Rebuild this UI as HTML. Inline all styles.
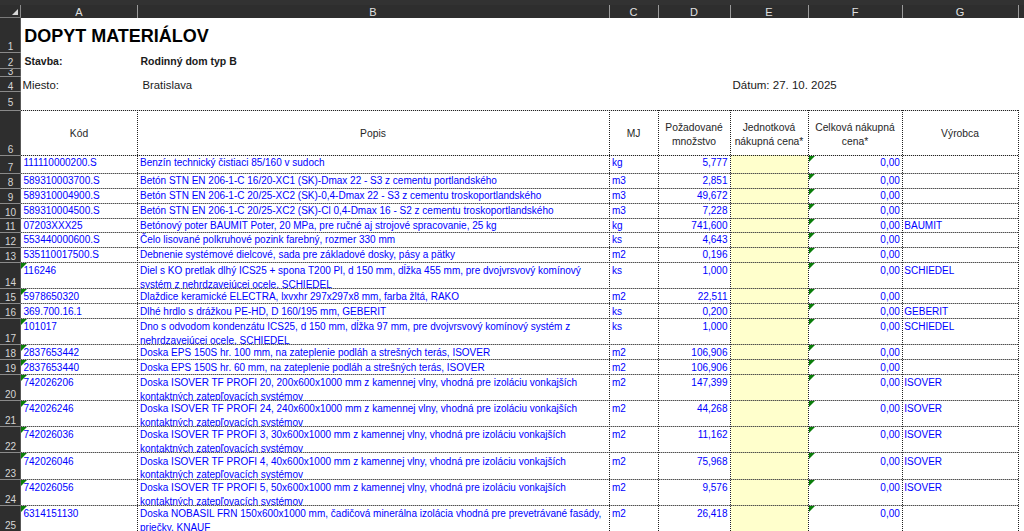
<!DOCTYPE html>
<html><head><meta charset="utf-8"><style>
html,body{margin:0;padding:0;}
body{width:1024px;height:531px;overflow:hidden;position:relative;background:#fff;font-family:"Liberation Sans", sans-serif;}
.t{position:absolute;white-space:nowrap;line-height:1;}
.r{position:absolute;}
</style></head><body>
<div class="r" style="left:731px;top:155px;width:77px;height:376px;background:#ffffcc;"></div>
<div class="t" style="left:24.2px;top:26.76px;font-size:18px;color:#000;font-weight:bold;">DOPYT MATERIÁLOV</div>
<div class="t" style="left:24.5px;top:56.11px;font-size:10.5px;color:#1a1a1a;font-weight:bold;">Stavba:</div>
<div class="t" style="left:140.5px;top:56.11px;font-size:10.5px;color:#1a1a1a;font-weight:bold;">Rodinný dom typ B</div>
<div class="t" style="left:22.5px;top:79.83px;font-size:11.3px;color:#1a1a1a;font-weight:normal;">Miesto:</div>
<div class="t" style="left:142.5px;top:79.83px;font-size:11.3px;color:#1a1a1a;font-weight:normal;">Bratislava</div>
<div class="t" style="left:732.5px;top:79.67px;font-size:11.5px;color:#1a1a1a;font-weight:normal;">Dátum: 27. 10. 2025</div>
<div class="t" style="left:-121.0px;width:400px;text-align:center;top:128.58px;font-size:10.3px;color:#262626;font-weight:normal;">Kód</div>
<div class="t" style="left:173.0px;width:400px;text-align:center;top:128.58px;font-size:10.3px;color:#262626;font-weight:normal;">Popis</div>
<div class="t" style="left:433.5px;width:400px;text-align:center;top:128.58px;font-size:10.3px;color:#262626;font-weight:normal;">MJ</div>
<div class="t" style="left:494.0px;width:400px;text-align:center;top:122.58px;font-size:10.3px;color:#262626;font-weight:normal;">Požadované</div>
<div class="t" style="left:494.0px;width:400px;text-align:center;top:136.58px;font-size:10.3px;color:#262626;font-weight:normal;">množstvo</div>
<div class="t" style="left:569.0px;width:400px;text-align:center;top:122.58px;font-size:10.3px;color:#262626;font-weight:normal;">Jednotková</div>
<div class="t" style="left:569.0px;width:400px;text-align:center;top:136.58px;font-size:10.3px;color:#262626;font-weight:normal;">nákupná cena*</div>
<div class="t" style="left:655.0px;width:400px;text-align:center;top:122.58px;font-size:10.3px;color:#262626;font-weight:normal;">Celková nákupná</div>
<div class="t" style="left:655.0px;width:400px;text-align:center;top:136.58px;font-size:10.3px;color:#262626;font-weight:normal;">cena*</div>
<div class="t" style="left:760.0px;width:400px;text-align:center;top:128.58px;font-size:10.3px;color:#262626;font-weight:normal;">Výrobca</div>
<div class="t" style="left:23.5px;top:158.23px;font-size:10px;color:#0000ff;font-weight:normal;">111110000200.S</div>
<div class="r" style="left:138px;top:156px;width:470px;height:17px;overflow:hidden;">
<div class="t" style="left:2px;top:2.23px;font-size:10px;color:#0000ff;">Benzín technický čistiaci 85/160 v sudoch</div>
</div>
<div class="t" style="left:612px;top:158.23px;font-size:10px;color:#0000ff;font-weight:normal;">kg</div>
<div class="t" style="right:296.5px;top:158.23px;font-size:10px;color:#0000ff;font-weight:normal;">5,777</div>
<div class="t" style="right:124.20000000000005px;top:158.23px;font-size:10px;color:#0000ff;font-weight:normal;">0,00</div>
<div class="t" style="left:23.5px;top:176.23px;font-size:10px;color:#0000ff;font-weight:normal;">589310003700.S</div>
<div class="r" style="left:138px;top:174px;width:470px;height:14px;overflow:hidden;">
<div class="t" style="left:2px;top:2.23px;font-size:10px;color:#0000ff;">Betón STN EN 206-1-C 16/20-XC1 (SK)-Dmax 22 - S3 z cementu portlandského</div>
</div>
<div class="t" style="left:612px;top:176.23px;font-size:10px;color:#0000ff;font-weight:normal;">m3</div>
<div class="t" style="right:296.5px;top:176.23px;font-size:10px;color:#0000ff;font-weight:normal;">2,851</div>
<div class="t" style="right:124.20000000000005px;top:176.23px;font-size:10px;color:#0000ff;font-weight:normal;">0,00</div>
<div class="t" style="left:23.5px;top:191.23px;font-size:10px;color:#0000ff;font-weight:normal;">589310004900.S</div>
<div class="r" style="left:138px;top:189px;width:470px;height:14px;overflow:hidden;">
<div class="t" style="left:2px;top:2.23px;font-size:10px;color:#0000ff;">Betón STN EN 206-1-C 20/25-XC2 (SK)-0,4-Dmax 22 - S3 z cementu troskoportlandského</div>
</div>
<div class="t" style="left:612px;top:191.23px;font-size:10px;color:#0000ff;font-weight:normal;">m3</div>
<div class="t" style="right:296.5px;top:191.23px;font-size:10px;color:#0000ff;font-weight:normal;">49,672</div>
<div class="t" style="right:124.20000000000005px;top:191.23px;font-size:10px;color:#0000ff;font-weight:normal;">0,00</div>
<div class="t" style="left:23.5px;top:206.23px;font-size:10px;color:#0000ff;font-weight:normal;">589310004500.S</div>
<div class="r" style="left:138px;top:204px;width:470px;height:14px;overflow:hidden;">
<div class="t" style="left:2px;top:2.23px;font-size:10px;color:#0000ff;">Betón STN EN 206-1-C 20/25-XC2 (SK)-Cl 0,4-Dmax 16 - S2 z cementu troskoportlandského</div>
</div>
<div class="t" style="left:612px;top:206.23px;font-size:10px;color:#0000ff;font-weight:normal;">m3</div>
<div class="t" style="right:296.5px;top:206.23px;font-size:10px;color:#0000ff;font-weight:normal;">7,228</div>
<div class="t" style="right:124.20000000000005px;top:206.23px;font-size:10px;color:#0000ff;font-weight:normal;">0,00</div>
<div class="t" style="left:23.5px;top:221.23px;font-size:10px;color:#0000ff;font-weight:normal;">07203XXX25</div>
<div class="r" style="left:138px;top:219px;width:470px;height:13px;overflow:hidden;">
<div class="t" style="left:2px;top:2.23px;font-size:10px;color:#0000ff;">Betónový poter BAUMIT Poter, 20 MPa, pre ručné aj strojové spracovanie, 25 kg</div>
</div>
<div class="t" style="left:612px;top:221.23px;font-size:10px;color:#0000ff;font-weight:normal;">kg</div>
<div class="t" style="right:296.5px;top:221.23px;font-size:10px;color:#0000ff;font-weight:normal;">741,600</div>
<div class="t" style="right:124.20000000000005px;top:221.23px;font-size:10px;color:#0000ff;font-weight:normal;">0,00</div>
<div class="t" style="left:904.3px;top:221.23px;font-size:10px;color:#0000ff;font-weight:normal;">BAUMIT</div>
<div class="t" style="left:23.5px;top:235.23px;font-size:10px;color:#0000ff;font-weight:normal;">553440000600.S</div>
<div class="r" style="left:138px;top:233px;width:470px;height:14px;overflow:hidden;">
<div class="t" style="left:2px;top:2.23px;font-size:10px;color:#0000ff;">Čelo lisované polkruhové pozink farebný, rozmer 330 mm</div>
</div>
<div class="t" style="left:612px;top:235.23px;font-size:10px;color:#0000ff;font-weight:normal;">ks</div>
<div class="t" style="right:296.5px;top:235.23px;font-size:10px;color:#0000ff;font-weight:normal;">4,643</div>
<div class="t" style="right:124.20000000000005px;top:235.23px;font-size:10px;color:#0000ff;font-weight:normal;">0,00</div>
<div class="t" style="left:23.5px;top:250.23px;font-size:10px;color:#0000ff;font-weight:normal;">535110017500.S</div>
<div class="r" style="left:138px;top:248px;width:470px;height:14px;overflow:hidden;">
<div class="t" style="left:2px;top:2.23px;font-size:10px;color:#0000ff;">Debnenie systémové dielcové, sada pre základové dosky, pásy a pätky</div>
</div>
<div class="t" style="left:612px;top:250.23px;font-size:10px;color:#0000ff;font-weight:normal;">m2</div>
<div class="t" style="right:296.5px;top:250.23px;font-size:10px;color:#0000ff;font-weight:normal;">0,196</div>
<div class="t" style="right:124.20000000000005px;top:250.23px;font-size:10px;color:#0000ff;font-weight:normal;">0,00</div>
<div class="t" style="left:23.5px;top:266.04px;font-size:10px;color:#0000ff;font-weight:normal;">116246</div>
<div class="r" style="left:138px;top:263px;width:470px;height:25px;overflow:hidden;">
<div class="t" style="left:2px;top:3.04px;font-size:10px;color:#0000ff;">Diel s KO pretlak dlhý ICS25 + spona T200 Pl, d 150 mm, dĺžka 455 mm, pre dvojvrsvový komínový</div>
<div class="t" style="left:2px;top:16.54px;font-size:10px;color:#0000ff;">systém z nehrdzavejúcej ocele, SCHIEDEL</div>
</div>
<div class="t" style="left:612px;top:266.04px;font-size:10px;color:#0000ff;font-weight:normal;">ks</div>
<div class="t" style="right:296.5px;top:266.04px;font-size:10px;color:#0000ff;font-weight:normal;">1,000</div>
<div class="t" style="right:124.20000000000005px;top:266.04px;font-size:10px;color:#0000ff;font-weight:normal;">0,00</div>
<div class="t" style="left:904.3px;top:266.04px;font-size:10px;color:#0000ff;font-weight:normal;">SCHIEDEL</div>
<div class="t" style="left:23.5px;top:292.04px;font-size:10px;color:#0000ff;font-weight:normal;">5978650320</div>
<div class="r" style="left:138px;top:289px;width:470px;height:14px;overflow:hidden;">
<div class="t" style="left:2px;top:3.04px;font-size:10px;color:#0000ff;">Dlaždice keramické ELECTRA, lxvxhr 297x297x8 mm, farba žltá, RAKO</div>
</div>
<div class="t" style="left:612px;top:292.04px;font-size:10px;color:#0000ff;font-weight:normal;">m2</div>
<div class="t" style="right:296.5px;top:292.04px;font-size:10px;color:#0000ff;font-weight:normal;">22,511</div>
<div class="t" style="right:124.20000000000005px;top:292.04px;font-size:10px;color:#0000ff;font-weight:normal;">0,00</div>
<div class="t" style="left:23.5px;top:307.04px;font-size:10px;color:#0000ff;font-weight:normal;">369.700.16.1</div>
<div class="r" style="left:138px;top:304px;width:470px;height:14px;overflow:hidden;">
<div class="t" style="left:2px;top:3.04px;font-size:10px;color:#0000ff;">Dlhé hrdlo s drážkou PE-HD, D 160/195 mm, GEBERIT</div>
</div>
<div class="t" style="left:612px;top:307.04px;font-size:10px;color:#0000ff;font-weight:normal;">ks</div>
<div class="t" style="right:296.5px;top:307.04px;font-size:10px;color:#0000ff;font-weight:normal;">0,200</div>
<div class="t" style="right:124.20000000000005px;top:307.04px;font-size:10px;color:#0000ff;font-weight:normal;">0,00</div>
<div class="t" style="left:904.3px;top:307.04px;font-size:10px;color:#0000ff;font-weight:normal;">GEBERIT</div>
<div class="t" style="left:23.5px;top:322.04px;font-size:10px;color:#0000ff;font-weight:normal;">101017</div>
<div class="r" style="left:138px;top:319px;width:470px;height:25px;overflow:hidden;">
<div class="t" style="left:2px;top:3.04px;font-size:10px;color:#0000ff;">Dno s odvodom kondenzátu ICS25, d 150 mm, dĺžka 97 mm, pre dvojvrsvový komínový systém z</div>
<div class="t" style="left:2px;top:16.54px;font-size:10px;color:#0000ff;">nehrdzavejúcej ocele, SCHIEDEL</div>
</div>
<div class="t" style="left:612px;top:322.04px;font-size:10px;color:#0000ff;font-weight:normal;">ks</div>
<div class="t" style="right:296.5px;top:322.04px;font-size:10px;color:#0000ff;font-weight:normal;">1,000</div>
<div class="t" style="right:124.20000000000005px;top:322.04px;font-size:10px;color:#0000ff;font-weight:normal;">0,00</div>
<div class="t" style="left:904.3px;top:322.04px;font-size:10px;color:#0000ff;font-weight:normal;">SCHIEDEL</div>
<div class="t" style="left:23.5px;top:348.04px;font-size:10px;color:#0000ff;font-weight:normal;">2837653442</div>
<div class="r" style="left:138px;top:345px;width:470px;height:14px;overflow:hidden;">
<div class="t" style="left:2px;top:3.04px;font-size:10px;color:#0000ff;">Doska EPS 150S hr. 100 mm, na zateplenie podláh a strešných terás, ISOVER</div>
</div>
<div class="t" style="left:612px;top:348.04px;font-size:10px;color:#0000ff;font-weight:normal;">m2</div>
<div class="t" style="right:296.5px;top:348.04px;font-size:10px;color:#0000ff;font-weight:normal;">106,906</div>
<div class="t" style="right:124.20000000000005px;top:348.04px;font-size:10px;color:#0000ff;font-weight:normal;">0,00</div>
<div class="t" style="left:23.5px;top:363.04px;font-size:10px;color:#0000ff;font-weight:normal;">2837653440</div>
<div class="r" style="left:138px;top:360px;width:470px;height:14px;overflow:hidden;">
<div class="t" style="left:2px;top:3.04px;font-size:10px;color:#0000ff;">Doska EPS 150S hr. 60 mm, na zateplenie podláh a strešných terás, ISOVER</div>
</div>
<div class="t" style="left:612px;top:363.04px;font-size:10px;color:#0000ff;font-weight:normal;">m2</div>
<div class="t" style="right:296.5px;top:363.04px;font-size:10px;color:#0000ff;font-weight:normal;">106,906</div>
<div class="t" style="right:124.20000000000005px;top:363.04px;font-size:10px;color:#0000ff;font-weight:normal;">0,00</div>
<div class="t" style="left:23.5px;top:378.04px;font-size:10px;color:#0000ff;font-weight:normal;">742026206</div>
<div class="r" style="left:138px;top:375px;width:470px;height:25px;overflow:hidden;">
<div class="t" style="left:2px;top:3.04px;font-size:10px;color:#0000ff;">Doska ISOVER TF PROFI 20, 200x600x1000 mm z kamennej vlny, vhodná pre izoláciu vonkajších</div>
<div class="t" style="left:2px;top:16.54px;font-size:10px;color:#0000ff;">kontaktných zatepľovacích systémov</div>
</div>
<div class="t" style="left:612px;top:378.04px;font-size:10px;color:#0000ff;font-weight:normal;">m2</div>
<div class="t" style="right:296.5px;top:378.04px;font-size:10px;color:#0000ff;font-weight:normal;">147,399</div>
<div class="t" style="right:124.20000000000005px;top:378.04px;font-size:10px;color:#0000ff;font-weight:normal;">0,00</div>
<div class="t" style="left:904.3px;top:378.04px;font-size:10px;color:#0000ff;font-weight:normal;">ISOVER</div>
<div class="t" style="left:23.5px;top:404.04px;font-size:10px;color:#0000ff;font-weight:normal;">742026246</div>
<div class="r" style="left:138px;top:401px;width:470px;height:25px;overflow:hidden;">
<div class="t" style="left:2px;top:3.04px;font-size:10px;color:#0000ff;">Doska ISOVER TF PROFI 24, 240x600x1000 mm z kamennej vlny, vhodná pre izoláciu vonkajších</div>
<div class="t" style="left:2px;top:16.54px;font-size:10px;color:#0000ff;">kontaktných zatepľovacích systémov</div>
</div>
<div class="t" style="left:612px;top:404.04px;font-size:10px;color:#0000ff;font-weight:normal;">m2</div>
<div class="t" style="right:296.5px;top:404.04px;font-size:10px;color:#0000ff;font-weight:normal;">44,268</div>
<div class="t" style="right:124.20000000000005px;top:404.04px;font-size:10px;color:#0000ff;font-weight:normal;">0,00</div>
<div class="t" style="left:904.3px;top:404.04px;font-size:10px;color:#0000ff;font-weight:normal;">ISOVER</div>
<div class="t" style="left:23.5px;top:430.04px;font-size:10px;color:#0000ff;font-weight:normal;">742026036</div>
<div class="r" style="left:138px;top:427px;width:470px;height:25px;overflow:hidden;">
<div class="t" style="left:2px;top:3.04px;font-size:10px;color:#0000ff;">Doska ISOVER TF PROFI 3, 30x600x1000 mm z kamennej vlny, vhodná pre izoláciu vonkajších</div>
<div class="t" style="left:2px;top:16.54px;font-size:10px;color:#0000ff;">kontaktných zatepľovacích systémov</div>
</div>
<div class="t" style="left:612px;top:430.04px;font-size:10px;color:#0000ff;font-weight:normal;">m2</div>
<div class="t" style="right:296.5px;top:430.04px;font-size:10px;color:#0000ff;font-weight:normal;">11,162</div>
<div class="t" style="right:124.20000000000005px;top:430.04px;font-size:10px;color:#0000ff;font-weight:normal;">0,00</div>
<div class="t" style="left:904.3px;top:430.04px;font-size:10px;color:#0000ff;font-weight:normal;">ISOVER</div>
<div class="t" style="left:23.5px;top:456.54px;font-size:10px;color:#0000ff;font-weight:normal;">742026046</div>
<div class="r" style="left:138px;top:453px;width:470px;height:26px;overflow:hidden;">
<div class="t" style="left:2px;top:3.54px;font-size:10px;color:#0000ff;">Doska ISOVER TF PROFI 4, 40x600x1000 mm z kamennej vlny, vhodná pre izoláciu vonkajších</div>
<div class="t" style="left:2px;top:17.04px;font-size:10px;color:#0000ff;">kontaktných zatepľovacích systémov</div>
</div>
<div class="t" style="left:612px;top:456.54px;font-size:10px;color:#0000ff;font-weight:normal;">m2</div>
<div class="t" style="right:296.5px;top:456.54px;font-size:10px;color:#0000ff;font-weight:normal;">75,968</div>
<div class="t" style="right:124.20000000000005px;top:456.54px;font-size:10px;color:#0000ff;font-weight:normal;">0,00</div>
<div class="t" style="left:904.3px;top:456.54px;font-size:10px;color:#0000ff;font-weight:normal;">ISOVER</div>
<div class="t" style="left:23.5px;top:483.04px;font-size:10px;color:#0000ff;font-weight:normal;">742026056</div>
<div class="r" style="left:138px;top:480px;width:470px;height:25px;overflow:hidden;">
<div class="t" style="left:2px;top:3.04px;font-size:10px;color:#0000ff;">Doska ISOVER TF PROFI 5, 50x600x1000 mm z kamennej vlny, vhodná pre izoláciu vonkajších</div>
<div class="t" style="left:2px;top:16.54px;font-size:10px;color:#0000ff;">kontaktných zatepľovacích systémov</div>
</div>
<div class="t" style="left:612px;top:483.04px;font-size:10px;color:#0000ff;font-weight:normal;">m2</div>
<div class="t" style="right:296.5px;top:483.04px;font-size:10px;color:#0000ff;font-weight:normal;">9,576</div>
<div class="t" style="right:124.20000000000005px;top:483.04px;font-size:10px;color:#0000ff;font-weight:normal;">0,00</div>
<div class="t" style="left:904.3px;top:483.04px;font-size:10px;color:#0000ff;font-weight:normal;">ISOVER</div>
<div class="t" style="left:23.5px;top:509.04px;font-size:10px;color:#0000ff;font-weight:normal;">6314151130</div>
<div class="r" style="left:138px;top:506px;width:470px;height:25px;overflow:hidden;">
<div class="t" style="left:2px;top:3.04px;font-size:10px;color:#0000ff;">Doska NOBASIL FRN 150x600x1000 mm, čadičová minerálna izolácia vhodná pre prevetrávané fasády,</div>
<div class="t" style="left:2px;top:16.53px;font-size:10px;color:#0000ff;">priečky, KNAUF</div>
</div>
<div class="t" style="left:612px;top:509.04px;font-size:10px;color:#0000ff;font-weight:normal;">m2</div>
<div class="t" style="right:296.5px;top:509.04px;font-size:10px;color:#0000ff;font-weight:normal;">26,418</div>
<div class="t" style="right:124.20000000000005px;top:509.04px;font-size:10px;color:#0000ff;font-weight:normal;">0,00</div>
<div class="r" style="left:21px;top:110px;width:998px;height:1px;background:repeating-linear-gradient(90deg,#222 0 1px,rgba(0,0,0,0.15) 1px 2px);"></div>
<div class="r" style="left:21px;top:155px;width:998px;height:1px;background:repeating-linear-gradient(90deg,#222 0 1px,rgba(0,0,0,0.15) 1px 2px);"></div>
<div class="r" style="left:21px;top:173px;width:998px;height:1px;background:repeating-linear-gradient(90deg,#505050 0 1px,rgba(0,0,0,0.3) 1px 2px);"></div>
<div class="r" style="left:21px;top:188px;width:998px;height:1px;background:repeating-linear-gradient(90deg,#505050 0 1px,rgba(0,0,0,0.3) 1px 2px);"></div>
<div class="r" style="left:21px;top:203px;width:998px;height:1px;background:repeating-linear-gradient(90deg,#505050 0 1px,rgba(0,0,0,0.3) 1px 2px);"></div>
<div class="r" style="left:21px;top:218px;width:998px;height:1px;background:repeating-linear-gradient(90deg,#505050 0 1px,rgba(0,0,0,0.3) 1px 2px);"></div>
<div class="r" style="left:21px;top:232px;width:998px;height:1px;background:repeating-linear-gradient(90deg,#505050 0 1px,rgba(0,0,0,0.3) 1px 2px);"></div>
<div class="r" style="left:21px;top:247px;width:998px;height:1px;background:repeating-linear-gradient(90deg,#505050 0 1px,rgba(0,0,0,0.3) 1px 2px);"></div>
<div class="r" style="left:21px;top:262px;width:998px;height:1px;background:repeating-linear-gradient(90deg,#505050 0 1px,rgba(0,0,0,0.3) 1px 2px);"></div>
<div class="r" style="left:21px;top:288px;width:998px;height:1px;background:repeating-linear-gradient(90deg,#505050 0 1px,rgba(0,0,0,0.3) 1px 2px);"></div>
<div class="r" style="left:21px;top:303px;width:998px;height:1px;background:repeating-linear-gradient(90deg,#505050 0 1px,rgba(0,0,0,0.3) 1px 2px);"></div>
<div class="r" style="left:21px;top:318px;width:998px;height:1px;background:repeating-linear-gradient(90deg,#505050 0 1px,rgba(0,0,0,0.3) 1px 2px);"></div>
<div class="r" style="left:21px;top:344px;width:998px;height:1px;background:repeating-linear-gradient(90deg,#505050 0 1px,rgba(0,0,0,0.3) 1px 2px);"></div>
<div class="r" style="left:21px;top:359px;width:998px;height:1px;background:repeating-linear-gradient(90deg,#505050 0 1px,rgba(0,0,0,0.3) 1px 2px);"></div>
<div class="r" style="left:21px;top:374px;width:998px;height:1px;background:repeating-linear-gradient(90deg,#505050 0 1px,rgba(0,0,0,0.3) 1px 2px);"></div>
<div class="r" style="left:21px;top:400px;width:998px;height:1px;background:repeating-linear-gradient(90deg,#505050 0 1px,rgba(0,0,0,0.3) 1px 2px);"></div>
<div class="r" style="left:21px;top:426px;width:998px;height:1px;background:repeating-linear-gradient(90deg,#505050 0 1px,rgba(0,0,0,0.3) 1px 2px);"></div>
<div class="r" style="left:21px;top:452px;width:998px;height:1px;background:repeating-linear-gradient(90deg,#505050 0 1px,rgba(0,0,0,0.3) 1px 2px);"></div>
<div class="r" style="left:21px;top:479px;width:998px;height:1px;background:repeating-linear-gradient(90deg,#505050 0 1px,rgba(0,0,0,0.3) 1px 2px);"></div>
<div class="r" style="left:21px;top:505px;width:998px;height:1px;background:repeating-linear-gradient(90deg,#505050 0 1px,rgba(0,0,0,0.3) 1px 2px);"></div>
<div class="r" style="left:137px;top:110px;width:1px;height:421px;background:repeating-linear-gradient(180deg,#222 0 1px,transparent 1px 2px);"></div>
<div class="r" style="left:609px;top:110px;width:1px;height:421px;background:repeating-linear-gradient(180deg,#222 0 1px,transparent 1px 2px);"></div>
<div class="r" style="left:658px;top:110px;width:1px;height:421px;background:repeating-linear-gradient(180deg,#222 0 1px,transparent 1px 2px);"></div>
<div class="r" style="left:730px;top:110px;width:1px;height:421px;background:repeating-linear-gradient(180deg,#222 0 1px,transparent 1px 2px);"></div>
<div class="r" style="left:808px;top:110px;width:1px;height:421px;background:repeating-linear-gradient(180deg,#222 0 1px,transparent 1px 2px);"></div>
<div class="r" style="left:902px;top:110px;width:1px;height:421px;background:repeating-linear-gradient(180deg,#222 0 1px,transparent 1px 2px);"></div>
<div class="r" style="left:1018px;top:110px;width:1px;height:421px;background:repeating-linear-gradient(180deg,#222 0 1px,transparent 1px 2px);"></div>
<div class="r" style="left:809px;top:156px;width:0;height:0;border-top:6px solid #0a7d0a;border-right:6px solid transparent;"></div>
<div class="r" style="left:809px;top:174px;width:0;height:0;border-top:6px solid #0a7d0a;border-right:6px solid transparent;"></div>
<div class="r" style="left:809px;top:189px;width:0;height:0;border-top:6px solid #0a7d0a;border-right:6px solid transparent;"></div>
<div class="r" style="left:809px;top:204px;width:0;height:0;border-top:6px solid #0a7d0a;border-right:6px solid transparent;"></div>
<div class="r" style="left:809px;top:219px;width:0;height:0;border-top:6px solid #0a7d0a;border-right:6px solid transparent;"></div>
<div class="r" style="left:809px;top:233px;width:0;height:0;border-top:6px solid #0a7d0a;border-right:6px solid transparent;"></div>
<div class="r" style="left:809px;top:248px;width:0;height:0;border-top:6px solid #0a7d0a;border-right:6px solid transparent;"></div>
<div class="r" style="left:809px;top:263px;width:0;height:0;border-top:6px solid #0a7d0a;border-right:6px solid transparent;"></div>
<div class="r" style="left:21px;top:263px;width:0;height:0;border-top:6px solid #0a7d0a;border-right:6px solid transparent;"></div>
<div class="r" style="left:809px;top:289px;width:0;height:0;border-top:6px solid #0a7d0a;border-right:6px solid transparent;"></div>
<div class="r" style="left:21px;top:289px;width:0;height:0;border-top:6px solid #0a7d0a;border-right:6px solid transparent;"></div>
<div class="r" style="left:809px;top:304px;width:0;height:0;border-top:6px solid #0a7d0a;border-right:6px solid transparent;"></div>
<div class="r" style="left:809px;top:319px;width:0;height:0;border-top:6px solid #0a7d0a;border-right:6px solid transparent;"></div>
<div class="r" style="left:21px;top:319px;width:0;height:0;border-top:6px solid #0a7d0a;border-right:6px solid transparent;"></div>
<div class="r" style="left:809px;top:345px;width:0;height:0;border-top:6px solid #0a7d0a;border-right:6px solid transparent;"></div>
<div class="r" style="left:21px;top:345px;width:0;height:0;border-top:6px solid #0a7d0a;border-right:6px solid transparent;"></div>
<div class="r" style="left:809px;top:360px;width:0;height:0;border-top:6px solid #0a7d0a;border-right:6px solid transparent;"></div>
<div class="r" style="left:21px;top:360px;width:0;height:0;border-top:6px solid #0a7d0a;border-right:6px solid transparent;"></div>
<div class="r" style="left:809px;top:375px;width:0;height:0;border-top:6px solid #0a7d0a;border-right:6px solid transparent;"></div>
<div class="r" style="left:21px;top:375px;width:0;height:0;border-top:6px solid #0a7d0a;border-right:6px solid transparent;"></div>
<div class="r" style="left:809px;top:401px;width:0;height:0;border-top:6px solid #0a7d0a;border-right:6px solid transparent;"></div>
<div class="r" style="left:21px;top:401px;width:0;height:0;border-top:6px solid #0a7d0a;border-right:6px solid transparent;"></div>
<div class="r" style="left:809px;top:427px;width:0;height:0;border-top:6px solid #0a7d0a;border-right:6px solid transparent;"></div>
<div class="r" style="left:21px;top:427px;width:0;height:0;border-top:6px solid #0a7d0a;border-right:6px solid transparent;"></div>
<div class="r" style="left:809px;top:453px;width:0;height:0;border-top:6px solid #0a7d0a;border-right:6px solid transparent;"></div>
<div class="r" style="left:21px;top:453px;width:0;height:0;border-top:6px solid #0a7d0a;border-right:6px solid transparent;"></div>
<div class="r" style="left:809px;top:480px;width:0;height:0;border-top:6px solid #0a7d0a;border-right:6px solid transparent;"></div>
<div class="r" style="left:21px;top:480px;width:0;height:0;border-top:6px solid #0a7d0a;border-right:6px solid transparent;"></div>
<div class="r" style="left:809px;top:506px;width:0;height:0;border-top:6px solid #0a7d0a;border-right:6px solid transparent;"></div>
<div class="r" style="left:21px;top:506px;width:0;height:0;border-top:6px solid #0a7d0a;border-right:6px solid transparent;"></div>
<div class="r" style="left:0px;top:0px;width:1024px;height:18px;background:#2e2e2e;"></div>
<div class="r" style="left:0px;top:0px;width:20px;height:531px;background:#2e2e2e;"></div>
<div class="r" style="left:20px;top:18px;width:1px;height:513px;background:#585858;"></div>
<div class="r" style="left:12px;top:9px;width:0;height:0;border-bottom:6px solid #d8d8d8;border-left:6px solid transparent;"></div>
<div class="r" style="left:0px;top:0px;width:1024px;height:5px;background:#323232;"></div>
<div class="r" style="left:20px;top:5px;width:1px;height:13px;background:#8a8a8a;"></div>
<div class="r" style="left:137px;top:5px;width:1px;height:13px;background:#9a9a9a;"></div>
<div class="r" style="left:609px;top:5px;width:1px;height:13px;background:#9a9a9a;"></div>
<div class="r" style="left:658px;top:5px;width:1px;height:13px;background:#9a9a9a;"></div>
<div class="r" style="left:730px;top:5px;width:1px;height:13px;background:#9a9a9a;"></div>
<div class="r" style="left:808px;top:5px;width:1px;height:13px;background:#9a9a9a;"></div>
<div class="r" style="left:902px;top:5px;width:1px;height:13px;background:#9a9a9a;"></div>
<div class="r" style="left:1018px;top:5px;width:1px;height:13px;background:#9a9a9a;"></div>
<div class="r" style="left:0px;top:17px;width:21px;height:1px;background:#7a7a7a;"></div>
<div class="t" style="left:-121.0px;width:400px;text-align:center;top:7.29px;font-size:11px;color:#e0e0e0;font-weight:normal;">A</div>
<div class="t" style="left:173.0px;width:400px;text-align:center;top:7.29px;font-size:11px;color:#e0e0e0;font-weight:normal;">B</div>
<div class="t" style="left:433.5px;width:400px;text-align:center;top:7.29px;font-size:11px;color:#e0e0e0;font-weight:normal;">C</div>
<div class="t" style="left:494.0px;width:400px;text-align:center;top:7.29px;font-size:11px;color:#e0e0e0;font-weight:normal;">D</div>
<div class="t" style="left:569.0px;width:400px;text-align:center;top:7.29px;font-size:11px;color:#e0e0e0;font-weight:normal;">E</div>
<div class="t" style="left:655.0px;width:400px;text-align:center;top:7.29px;font-size:11px;color:#e0e0e0;font-weight:normal;">F</div>
<div class="t" style="left:760.0px;width:400px;text-align:center;top:7.29px;font-size:11px;color:#e0e0e0;font-weight:normal;">G</div>
<div class="r" style="left:0;top:19px;width:20px;height:33px;overflow:hidden;"><div class="t" style="left:0;width:21px;text-align:center;top:22.64px;font-size:10px;color:#d6d6d6;">1</div></div>
<div class="r" style="left:0px;top:52px;width:21px;height:1px;background:#8a8a8a;"></div>
<div class="r" style="left:0;top:53px;width:20px;height:15px;overflow:hidden;"><div class="t" style="left:0;width:21px;text-align:center;top:4.63px;font-size:10px;color:#d6d6d6;">2</div></div>
<div class="r" style="left:0px;top:68px;width:21px;height:1px;background:#8a8a8a;"></div>
<div class="r" style="left:0;top:69px;width:20px;height:7px;overflow:hidden;"><div class="t" style="left:0;width:21px;text-align:center;top:-2.37px;font-size:10px;color:#d6d6d6;">3</div></div>
<div class="r" style="left:0px;top:76px;width:21px;height:1px;background:#8a8a8a;"></div>
<div class="r" style="left:0;top:77px;width:20px;height:14px;overflow:hidden;"><div class="t" style="left:0;width:21px;text-align:center;top:5.13px;font-size:10px;color:#d6d6d6;">4</div></div>
<div class="r" style="left:0px;top:91px;width:21px;height:1px;background:#8a8a8a;"></div>
<div class="r" style="left:0;top:92px;width:20px;height:18px;overflow:hidden;"><div class="t" style="left:0;width:21px;text-align:center;top:5.63px;font-size:10px;color:#d6d6d6;">5</div></div>
<div class="r" style="left:0px;top:110px;width:21px;height:1px;background:#8a8a8a;"></div>
<div class="r" style="left:0;top:111px;width:20px;height:44px;overflow:hidden;"><div class="t" style="left:0;width:21px;text-align:center;top:33.63px;font-size:10px;color:#d6d6d6;">6</div></div>
<div class="r" style="left:0px;top:155px;width:21px;height:1px;background:#8a8a8a;"></div>
<div class="r" style="left:0;top:156px;width:20px;height:17px;overflow:hidden;"><div class="t" style="left:0;width:21px;text-align:center;top:6.63px;font-size:10px;color:#d6d6d6;">7</div></div>
<div class="r" style="left:0px;top:173px;width:21px;height:1px;background:#8a8a8a;"></div>
<div class="r" style="left:0;top:174px;width:20px;height:14px;overflow:hidden;"><div class="t" style="left:0;width:21px;text-align:center;top:3.63px;font-size:10px;color:#d6d6d6;">8</div></div>
<div class="r" style="left:0px;top:188px;width:21px;height:1px;background:#8a8a8a;"></div>
<div class="r" style="left:0;top:189px;width:20px;height:14px;overflow:hidden;"><div class="t" style="left:0;width:21px;text-align:center;top:3.63px;font-size:10px;color:#d6d6d6;">9</div></div>
<div class="r" style="left:0px;top:203px;width:21px;height:1px;background:#8a8a8a;"></div>
<div class="r" style="left:0;top:204px;width:20px;height:14px;overflow:hidden;"><div class="t" style="left:0;width:21px;text-align:center;top:3.63px;font-size:10px;color:#d6d6d6;">10</div></div>
<div class="r" style="left:0px;top:218px;width:21px;height:1px;background:#8a8a8a;"></div>
<div class="r" style="left:0;top:219px;width:20px;height:13px;overflow:hidden;"><div class="t" style="left:0;width:21px;text-align:center;top:2.63px;font-size:10px;color:#d6d6d6;">11</div></div>
<div class="r" style="left:0px;top:232px;width:21px;height:1px;background:#8a8a8a;"></div>
<div class="r" style="left:0;top:233px;width:20px;height:14px;overflow:hidden;"><div class="t" style="left:0;width:21px;text-align:center;top:3.63px;font-size:10px;color:#d6d6d6;">12</div></div>
<div class="r" style="left:0px;top:247px;width:21px;height:1px;background:#8a8a8a;"></div>
<div class="r" style="left:0;top:248px;width:20px;height:14px;overflow:hidden;"><div class="t" style="left:0;width:21px;text-align:center;top:3.64px;font-size:10px;color:#d6d6d6;">13</div></div>
<div class="r" style="left:0px;top:262px;width:21px;height:1px;background:#8a8a8a;"></div>
<div class="r" style="left:0;top:263px;width:20px;height:25px;overflow:hidden;"><div class="t" style="left:0;width:21px;text-align:center;top:14.64px;font-size:10px;color:#d6d6d6;">14</div></div>
<div class="r" style="left:0px;top:288px;width:21px;height:1px;background:#8a8a8a;"></div>
<div class="r" style="left:0;top:289px;width:20px;height:14px;overflow:hidden;"><div class="t" style="left:0;width:21px;text-align:center;top:3.64px;font-size:10px;color:#d6d6d6;">15</div></div>
<div class="r" style="left:0px;top:303px;width:21px;height:1px;background:#8a8a8a;"></div>
<div class="r" style="left:0;top:304px;width:20px;height:14px;overflow:hidden;"><div class="t" style="left:0;width:21px;text-align:center;top:3.64px;font-size:10px;color:#d6d6d6;">16</div></div>
<div class="r" style="left:0px;top:318px;width:21px;height:1px;background:#8a8a8a;"></div>
<div class="r" style="left:0;top:319px;width:20px;height:25px;overflow:hidden;"><div class="t" style="left:0;width:21px;text-align:center;top:14.64px;font-size:10px;color:#d6d6d6;">17</div></div>
<div class="r" style="left:0px;top:344px;width:21px;height:1px;background:#8a8a8a;"></div>
<div class="r" style="left:0;top:345px;width:20px;height:14px;overflow:hidden;"><div class="t" style="left:0;width:21px;text-align:center;top:3.64px;font-size:10px;color:#d6d6d6;">18</div></div>
<div class="r" style="left:0px;top:359px;width:21px;height:1px;background:#8a8a8a;"></div>
<div class="r" style="left:0;top:360px;width:20px;height:14px;overflow:hidden;"><div class="t" style="left:0;width:21px;text-align:center;top:3.64px;font-size:10px;color:#d6d6d6;">19</div></div>
<div class="r" style="left:0px;top:374px;width:21px;height:1px;background:#8a8a8a;"></div>
<div class="r" style="left:0;top:375px;width:20px;height:25px;overflow:hidden;"><div class="t" style="left:0;width:21px;text-align:center;top:14.64px;font-size:10px;color:#d6d6d6;">20</div></div>
<div class="r" style="left:0px;top:400px;width:21px;height:1px;background:#8a8a8a;"></div>
<div class="r" style="left:0;top:401px;width:20px;height:25px;overflow:hidden;"><div class="t" style="left:0;width:21px;text-align:center;top:14.64px;font-size:10px;color:#d6d6d6;">21</div></div>
<div class="r" style="left:0px;top:426px;width:21px;height:1px;background:#8a8a8a;"></div>
<div class="r" style="left:0;top:427px;width:20px;height:25px;overflow:hidden;"><div class="t" style="left:0;width:21px;text-align:center;top:15.14px;font-size:10px;color:#d6d6d6;">22</div></div>
<div class="r" style="left:0px;top:452px;width:21px;height:1px;background:#8a8a8a;"></div>
<div class="r" style="left:0;top:453px;width:20px;height:26px;overflow:hidden;"><div class="t" style="left:0;width:21px;text-align:center;top:15.64px;font-size:10px;color:#d6d6d6;">23</div></div>
<div class="r" style="left:0px;top:479px;width:21px;height:1px;background:#8a8a8a;"></div>
<div class="r" style="left:0;top:480px;width:20px;height:25px;overflow:hidden;"><div class="t" style="left:0;width:21px;text-align:center;top:14.64px;font-size:10px;color:#d6d6d6;">24</div></div>
<div class="r" style="left:0px;top:505px;width:21px;height:1px;background:#8a8a8a;"></div>
<div class="r" style="left:0;top:506px;width:20px;height:25px;overflow:hidden;"><div class="t" style="left:0;width:21px;text-align:center;top:14.63px;font-size:10px;color:#d6d6d6;">25</div></div>
<div class="r" style="left:0px;top:531px;width:21px;height:1px;background:#8a8a8a;"></div>
</body></html>
